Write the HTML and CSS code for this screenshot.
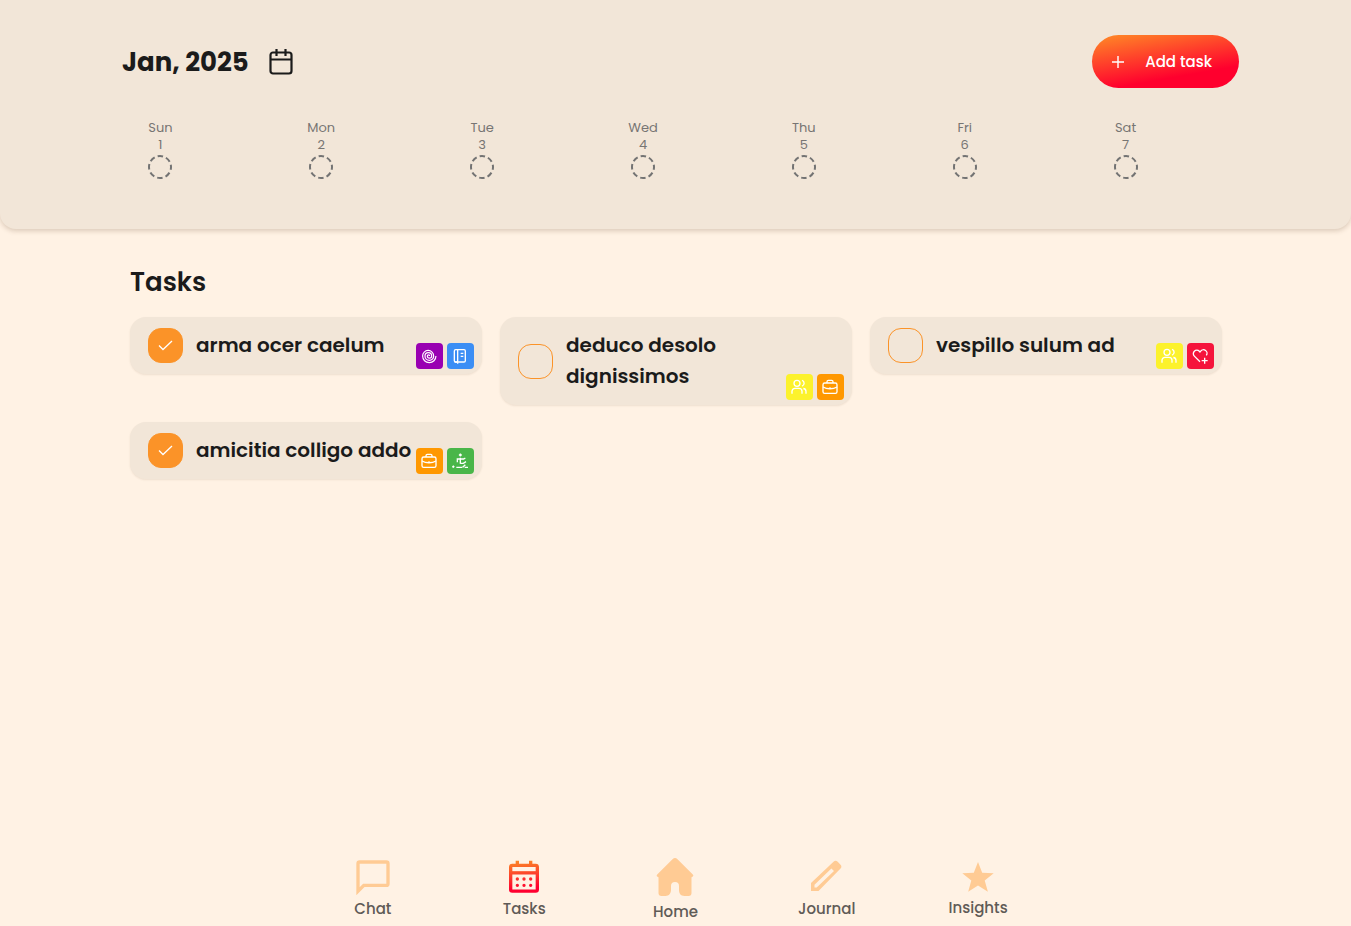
FILE: index.html
```html
<!DOCTYPE html>
<html lang="en">
<head>
<meta charset="utf-8">
<meta name="viewport" content="width=device-width, initial-scale=1">
<title>Tasks</title>
<link rel="stylesheet" href="styles.css">
</head>
<body>
<svg class="defs" aria-hidden="true">
  <defs>
    <linearGradient id="hot" gradientUnits="userSpaceOnUse" x1="10" y1="2" x2="12" y2="19">
      <stop offset="0" stop-color="#fb8625"/><stop offset="1" stop-color="#ff0030"/>
    </linearGradient>
    <symbol id="tick" viewBox="0 0 16 16"><path d="M1 7.500l4 4L14 3" fill="none" stroke="currentColor" stroke-width="1.300"/></symbol>
    <symbol id="ring" viewBox="0 0 24 24"><circle cx="12" cy="12" r="11" fill="none" stroke="currentColor" stroke-width="2" stroke-dasharray="5.500 3.140" stroke-dashoffset="2.750"/></symbol>
    <symbol id="spiral" viewBox="0 0 24 24"><path d="M13 12a1.750 1.750 0 0 0-3.500 0a3.250 3.250 0 0 0 6.500 0a5 5 0 0 0-10 0a6.500 6.500 0 0 0 13 0a8.300 8.300 0 0 0-16.600 0a10 10 0 0 0 20 0" stroke-width="1.800"/></symbol>
    <symbol id="book" viewBox="0 0 24 24"><rect x="3.500" y="2.500" width="16.500" height="18.500" rx="2"/><path d="M8.500 2.500V23.500M4 21h5M13 8h4M13 12.500h4"/></symbol>
    <symbol id="case" viewBox="0 0 24 24"><rect x="1.500" y="6" width="21" height="15.500" rx="2.500"/><path d="M7.500 6V4a2 2 0 0 1 2-2h5a2 2 0 0 1 2 2v2M1.500 12c6 3.500 15 3.500 21 0M12 12v1"/></symbol>
    <symbol id="people" viewBox="0 0 24 24"><circle cx="9" cy="6.500" r="4.500"/><path d="M1.500 22v-3.500a4.500 4.500 0 0 1 4.500-4.500h6a4.500 4.500 0 0 1 4.500 4.500V22M16.500 2.200a4.500 4.500 0 0 1 0 8.600M18.500 14.200a4.500 4.500 0 0 1 4 4.500V22"/></symbol>
    <symbol id="heart" viewBox="0 0 24 24"><path d="M12 20.500l-8.500-8.300a5 5 0 0 1 7.500-7.400l1 1.200 1-1.200a5 5 0 0 1 8.500 6.200M19 14.500v9M14.500 19h9"/></symbol>
    <symbol id="move" viewBox="0 0 24 24"><circle cx="12.500" cy="3" r="1.700" fill="currentColor" stroke-width="1"/><path d="M12.500 7v9M8 14V9h9.500l2.500-1.500M12.500 15.500h4.500l4-2.500M6.500 21.500h9M16 21.500l4-4M19 21.500h5"/><circle cx="2" cy="20.500" r="1.300" fill="currentColor" stroke-width="1"/></symbol>
  </defs>
</svg>

<header class="header">
  <div class="topbar">
    <h1 class="month">Jan, 2025</h1>
    <button class="calendar" type="button" aria-label="Choose date">
      <svg viewBox="0 0 24 26" fill="none" stroke="currentColor" stroke-width="2.200"><rect x="1.500" y="3.500" width="21" height="21" rx="2.500"/><path d="M1.500 10.500h21M7.500 0v7M16.500 0v7"/></svg>
    </button>
    <button class="add" type="button">
      <svg viewBox="0 0 12 12" fill="none" stroke="currentColor" stroke-width="1.400"><path d="M6 0v12M0 6h12"/></svg>
      Add task
    </button>
  </div>
  <div class="week">
    <button class="day" type="button"><span>Sun</span><span>1</span><svg><use href="#ring"/></svg></button>
    <button class="day" type="button"><span>Mon</span><span>2</span><svg><use href="#ring"/></svg></button>
    <button class="day" type="button"><span>Tue</span><span>3</span><svg><use href="#ring"/></svg></button>
    <button class="day" type="button"><span>Wed</span><span>4</span><svg><use href="#ring"/></svg></button>
    <button class="day" type="button"><span>Thu</span><span>5</span><svg><use href="#ring"/></svg></button>
    <button class="day" type="button"><span>Fri</span><span>6</span><svg><use href="#ring"/></svg></button>
    <button class="day" type="button"><span>Sat</span><span>7</span><svg><use href="#ring"/></svg></button>
  </div>
</header>

<main class="tasks">
  <h2 class="heading">Tasks</h2>
  <div class="grid">
    <article class="card">
      <span class="check"><input id="t1" type="checkbox" checked><svg><use href="#tick"/></svg></span>
      <label class="name" for="t1">arma ocer caelum</label>
      <div class="chips"><span class="chip purple"><svg><use href="#spiral"/></svg></span><span class="chip blue"><svg><use href="#book"/></svg></span></div>
    </article>
    <article class="card">
      <span class="check"><input id="t2" type="checkbox"><svg><use href="#tick"/></svg></span>
      <label class="name" for="t2">deduco desolo dignissimos</label>
      <div class="chips"><span class="chip yellow"><svg><use href="#people"/></svg></span><span class="chip orange"><svg><use href="#case"/></svg></span></div>
    </article>
    <article class="card">
      <span class="check"><input id="t3" type="checkbox"><svg><use href="#tick"/></svg></span>
      <label class="name" for="t3">vespillo sulum ad</label>
      <div class="chips"><span class="chip yellow"><svg><use href="#people"/></svg></span><span class="chip red"><svg><use href="#heart"/></svg></span></div>
    </article>
    <article class="card">
      <span class="check"><input id="t4" type="checkbox" checked><svg><use href="#tick"/></svg></span>
      <label class="name" for="t4">amicitia colligo addo</label>
      <div class="chips"><span class="chip orange"><svg><use href="#case"/></svg></span><span class="chip green"><svg><use href="#move"/></svg></span></div>
    </article>
  </div>
</main>

<nav class="nav">
  <a class="item" href="#chat">
    <svg class="icon" viewBox="0 0 24 24" fill="none" stroke="currentColor" stroke-width="2"><path d="M3 20.500V4a1 1 0 0 1 1-1h16a1 1 0 0 1 1 1v12a1 1 0 0 1-1 1H6.500z" stroke-linejoin="miter"/></svg>
    Chat</a>
  <a class="item" href="#tasks" aria-current="page">
    <svg class="icon" viewBox="0 0 24 24" fill="none" stroke="url(#hot)" stroke-width="2"><rect x="4" y="5" width="16" height="15.500" rx="1"/><path d="M8 2.300V5M16 2.300V5"/><path d="M4 9.500h16"/><path d="M8 13.200h.01M12 13.200h.01M16 13.200h.01M8 17h.01M12 17h.01M16 17h.01" stroke-linecap="round"/></svg>
    Tasks</a>
  <a class="item" href="#home">
    <svg class="icon large" viewBox="0 0 46 46" fill="currentColor"><path d="M20.500 5.200a3.500 3.500 0 0 1 5 0l15.300 15.300c1 1 .5 2-.8 2.500l-.5.300V39a3 3 0 0 1-3 3h-4c-4 0-5.500-3-5.500-6v-4a4 4 0 0 0-8 0v4c0 3-2 6-5.500 6h-4a3 3 0 0 1-3-3V23.300L6 23c-1.300-.5-1.800-1.500-.8-2.500z"/></svg>
    Home</a>
  <a class="item" href="#journal">
    <svg class="icon" viewBox="0 0 40 40" fill="currentColor" fill-rule="evenodd"><path d="M4 34v-8L26.500 4.800a3 3 0 0 1 4.200 0l2.600 2.600a3 3 0 0 1 0 4.300L11.500 34zM7.500 30.500h2.200L27 14l-2.600-2.600L7.500 27.800z"/></svg>
    Journal</a>
  <a class="item" href="#insights">
    <svg class="icon small" viewBox="0 0 38 38" fill="currentColor"><path d="M19 4l4.200 10.700 11.500.6-9 7.200 3.200 11.200L19 27.500 9.200 33.700 12.300 22.500l-9-7.200 11.500-.6z"/></svg>
    Insights</a>
</nav>
</body>
</html>
```
FILE: styles.css
```css
* { box-sizing: border-box; }

body {
  margin: 0;
  min-height: 100vh;
  display: flex;
  flex-direction: column;
  background: #fff2e4;
  color: #1b1b1b;
  font-family: Poppins, Inter, sans-serif;
}

button { font: inherit; color: inherit; border: 0; background: none; padding: 0; cursor: pointer; }
h1, h2 { margin: 0; }
.defs { position: absolute; width: 0; height: 0; }

.header {
  padding: 35px 0 50px;
  background: #f2e6d8;
  border-radius: 0 0 16px 16px;
  box-shadow: 0 2px 5px rgba(90, 60, 30, 0.22);
}

.topbar {
  display: flex;
  align-items: center;
  padding: 0 112px 0 122px;
}
.month { font-size: 26px; line-height: 40px; font-weight: 700; }
.calendar { margin-left: 20px; height: 26px; }
.calendar svg { width: 24px; height: 26px; display: block; }

.add {
  display: flex;
  align-items: center;
  gap: 21px;
  margin-left: auto;
  padding: 0 27px 0 20px;
  height: 53px;
  border-radius: 27px;
  color: #fff;
  font-size: 15px;
  font-weight: 500;
  background: linear-gradient(170deg, #ff8c26 0%, #ff002e 72%);
}
.add svg { width: 12px; height: 12px; }

.week {
  display: grid;
  grid-template-columns: repeat(7, 1fr);
  padding: 31px 145px 0 80px;
}
.day {
  display: flex;
  flex-direction: column;
  align-items: center;
  justify-self: center;
  color: #777573;
  font-size: 13px;
  line-height: 17px;
}
.day svg { width: 24px; height: 24px; margin-top: 2px; color: #737373; }

.tasks { padding: 35px 129px 24px 130px; }
.heading { font-size: 26px; line-height: 36px; font-weight: 600; }

.grid {
  display: grid;
  grid-template-columns: repeat(3, 1fr);
  align-items: start;
  gap: 17px 18px;
  margin-top: 17px;
}
.card {
  position: relative;
  display: flex;
  align-items: center;
  gap: 13px;
  padding: 13px 64px 13px 18px;
  background: #f2e6d8;
  border-radius: 16px;
  box-shadow: 0 1px 2px rgba(90, 60, 30, 0.1);
}
.name { font-size: 20px; line-height: 31px; font-weight: 600; }

.check { display: grid; place-items: center; flex: none; margin: -2px 0; }
.check input, .check svg { grid-area: 1 / 1; }
.check input {
  appearance: none;
  width: 35px;
  height: 35px;
  margin: 0;
  border: 1px solid #fb9328;
  border-radius: 13px;
}
.check input:checked { background: #fb9328; }
.check svg { width: 16px; height: 16px; color: #fff; pointer-events: none; visibility: hidden; }
.check input:checked + svg { visibility: visible; }

.chips { position: absolute; right: 8px; bottom: 5px; display: flex; gap: 4px; }
.chip {
  display: grid;
  align-items: center;
  padding-left: 5px;
  width: 27px;
  height: 26px;
  border-radius: 4px;
}
.chip svg { width: 16px; height: 16px; color: #fff; fill: none; stroke: #fff; stroke-width: 2; }
.purple { background: #9900b2; }
.blue { background: #3b8ef5; }
.yellow { background: #fcf22c; }
.orange { background: #ff9800; }
.red { background: #f5143c; }
.green { background: #49b649; }

.nav {
  display: grid;
  grid-template-columns: repeat(5, 1fr);
  align-items: center;
  width: 56%;
  margin: auto auto 2px;
}
.item {
  display: flex;
  flex-direction: column;
  align-items: center;
  color: #5f5b57;
  font-size: 15px;
  line-height: 24px;
  font-weight: 500;
  text-decoration: none;
}
.icon { width: 40px; height: 40px; color: #ffcb94; }
.large { width: 46px; height: 46px; }
.small { width: 38px; height: 38px; }
```
